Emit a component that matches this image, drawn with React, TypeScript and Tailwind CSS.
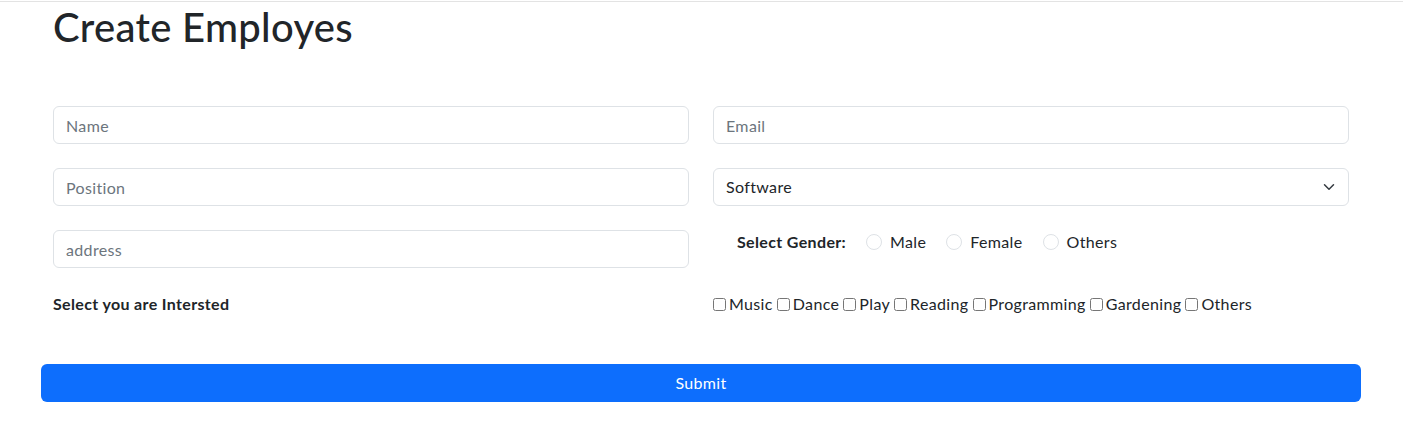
import React, { useState } from "react";

/* ---------------- DATA ---------------- */
const GENDERS = ["Male", "Female", "Others"];
const INTERESTS = ["Music", "Dance", "Play", "Reading", "Programming", "Gardening", "Others"];

const inputCls =
  "block w-full h-[38px] px-3 rounded-[6px] border border-[#dee2e6] bg-white text-base text-[#212529] placeholder:text-[#6c757d] outline-none";

/* ---------------- COMPONENT ---------------- */
const App: React.FC = () => {
  const [position, setPosition] = useState("Software");
  const [gender, setGender] = useState("");

  return (
    <div className="min-h-screen bg-white pt-px font-['Segoe_UI','Lato',sans-serif] tracking-[0.35px] text-[#212529]">
      {/* top rule */}
      <div className="h-px bg-[#e3e3e3]" />

      <div className="ml-[41px] w-[1320px]">
        <h1 className="px-3 pt-px text-[40px] font-medium leading-[48px] tracking-[0.3px]">Create Employes</h1>

        <form className="mt-[55px]" onSubmit={(e) => e.preventDefault()}>
          <div className="grid grid-cols-2">
            {/* row 1 */}
            <div className="px-3 mb-6">
              <input className={inputCls} placeholder="Name" />
            </div>
            <div className="px-3 mb-6">
              <input className={inputCls} placeholder="Email" />
            </div>

            {/* row 2 */}
            <div className="px-3 mb-6">
              <input className={inputCls} placeholder="Position" />
            </div>
            <div className="px-3 mb-6">
              <div className="relative">
                <select
                  value={position}
                  onChange={(e) => setPosition(e.target.value)}
                  className={`${inputCls} appearance-none pr-10`}
                >
                  <option>Software</option>
                  <option>Hardware</option>
                  <option>Testing</option>
                </select>
                <svg
                  className="pointer-events-none absolute right-3 top-1/2 -translate-y-1/2"
                  width="16"
                  height="12"
                  viewBox="0 0 16 16"
                  fill="none"
                  stroke="#343a40"
                  strokeWidth="2"
                  strokeLinecap="round"
                  strokeLinejoin="round"
                >
                  <path d="m2 5 6 6 6-6" />
                </svg>
              </div>
            </div>

            {/* row 3 */}
            <div className="px-3 mb-6">
              <input className={inputCls} placeholder="address" />
            </div>
            <div className="px-3 mb-6">
              <div className="flex h-6 items-center pl-6">
                <span className="mr-5 font-bold">Select Gender:</span>
                {GENDERS.map((g) => (
                  <label key={g} className="mr-5 flex items-center">
                    <input
                      type="radio"
                      name="gender"
                      checked={gender === g}
                      onChange={() => setGender(g)}
                      className="mr-2 h-4 w-4 appearance-none rounded-full border border-[#dee2e6] bg-white checked:border-[#0d6efd] checked:bg-[#0d6efd]"
                    />
                    {g}
                  </label>
                ))}
              </div>
            </div>

            {/* row 4 */}
            <div className="px-3">
              <div className="flex h-6 items-center font-bold">Select you are Intersted</div>
            </div>
            <div className="px-3">
              <div className="flex h-6 items-center">
                {INTERESTS.map((i) => (
                  <label key={i} className="mr-[4px] flex items-center">
                    <input type="checkbox" className="m-0 mr-[3px] h-[13px] w-[13px]" />
                    {i}
                  </label>
                ))}
              </div>
            </div>
          </div>

          <button
            type="submit"
            className="mt-12 block h-[38px] w-full rounded-[6px] bg-[#0d6efd] text-base text-white"
          >
            Submit
          </button>
        </form>
      </div>
    </div>
  );
};

export default App;
